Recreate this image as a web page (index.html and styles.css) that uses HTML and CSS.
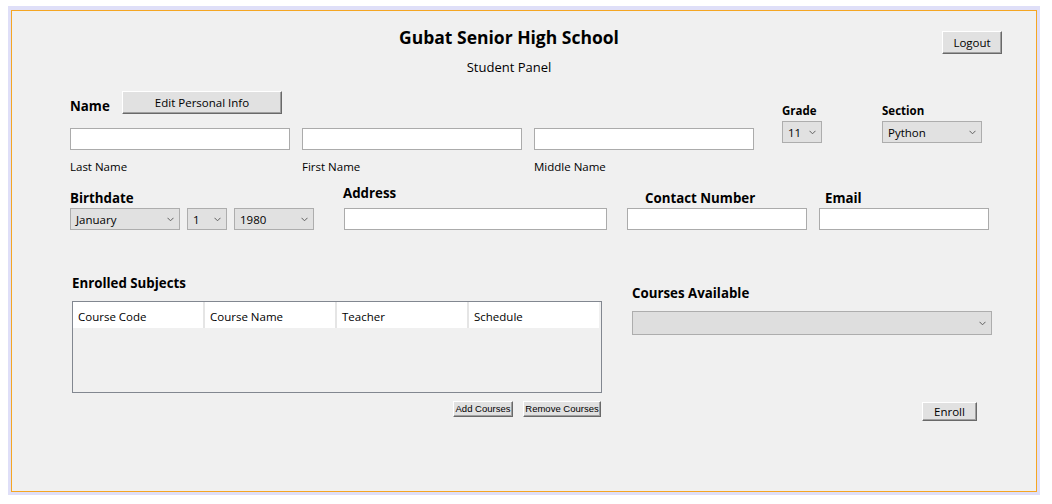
FILE: index.html
```html
<!DOCTYPE html>
<html lang="en">
<head>
<meta charset="utf-8">
<title>Student Panel</title>
<link rel="stylesheet" href="styles.css">
</head>
<body>
<div class="frame">
  <div class="panel">
    <header class="header">
      <div class="titles">
        <h1 class="title">Gubat Senior High School</h1>
        <p class="subtitle">Student Panel</p>
      </div>
      <button class="btn btn-logout" type="button">Logout</button>
    </header>

    <section class="row row-name">
      <div class="name-block">
        <div class="name-head">
          <span class="label label-name">Name</span>
          <button class="btn btn-edit" type="button">Edit Personal Info</button>
        </div>
        <div class="name-fields">
          <div class="field"><input class="entry entry-name" type="text"><span class="sublabel">Last Name</span></div>
          <div class="field"><input class="entry entry-name" type="text"><span class="sublabel">First Name</span></div>
          <div class="field"><input class="entry entry-name" type="text"><span class="sublabel">Middle Name</span></div>
        </div>
      </div>
      <div class="small-group grade-group">
        <span class="label-sm">Grade</span>
        <div class="combo combo-grade"><span>11</span><svg class="chev" width="7" height="5" viewBox="0 0 7 5"><polyline points="0.5,0.8 3.5,3.8 6.5,0.8"/></svg></div>
      </div>
      <div class="small-group section-group">
        <span class="label-sm">Section</span>
        <div class="combo combo-section"><span>Python</span><svg class="chev" width="7" height="5" viewBox="0 0 7 5"><polyline points="0.5,0.8 3.5,3.8 6.5,0.8"/></svg></div>
      </div>
    </section>

    <section class="row row-info">
      <div class="group bd-group">
        <span class="label label-bd">Birthdate</span>
        <div class="combos">
          <div class="combo combo-month"><span>January</span><svg class="chev" width="7" height="5" viewBox="0 0 7 5"><polyline points="0.5,0.8 3.5,3.8 6.5,0.8"/></svg></div>
          <div class="combo combo-day"><span>1</span><svg class="chev" width="7" height="5" viewBox="0 0 7 5"><polyline points="0.5,0.8 3.5,3.8 6.5,0.8"/></svg></div>
          <div class="combo combo-year"><span>1980</span><svg class="chev" width="7" height="5" viewBox="0 0 7 5"><polyline points="0.5,0.8 3.5,3.8 6.5,0.8"/></svg></div>
        </div>
      </div>
      <div class="group addr-group">
        <span class="label label-addr">Address</span>
        <input class="entry entry-addr" type="text">
      </div>
      <div class="group contact-group">
        <span class="label label-contact">Contact Number</span>
        <input class="entry entry-contact" type="text">
      </div>
      <div class="group email-group">
        <span class="label label-email">Email</span>
        <input class="entry entry-email" type="text">
      </div>
    </section>

    <section class="row row-courses">
      <div class="enrolled">
        <span class="label">Enrolled Subjects</span>
        <div class="table">
          <div class="thead">
            <div class="th">Course Code</div>
            <div class="th">Course Name</div>
            <div class="th">Teacher</div>
            <div class="th th-last">Schedule</div>
          </div>
        </div>
        <div class="table-actions">
          <button class="btn btn-small btn-add" type="button">Add Courses</button>
          <button class="btn btn-small btn-remove" type="button">Remove Courses</button>
        </div>
      </div>
      <div class="available">
        <span class="label">Courses Available</span>
        <div class="combo combo-courses"><svg class="chev" width="7" height="5" viewBox="0 0 7 5"><polyline points="0.5,0.8 3.5,3.8 6.5,0.8"/></svg></div>
        <button class="btn btn-enroll" type="button">Enroll</button>
      </div>
    </section>
  </div>
</div>
</body>
</html>
```

FILE: styles.css
```css
* { box-sizing: border-box; }

body {
  margin: 6px 8px;
  background: #ffffff;
  font-family: "Open Sans", "Noto Sans", sans-serif;
  color: #000000;
}

.frame {
  width: 1032px;
  border: 3px solid #dfdff8;
  border-top-width: 4px;
}

.panel {
  height: 482px;
  border: 1px solid #f5a623;
  background: #f0f0f0;
}

/* header */
.header {
  display: grid;
}
.titles,
.btn-logout {
  grid-area: 1 / 1;
}
.titles {
  padding: 14px 30px 0 0;
  text-align: center;
}
.title {
  margin: 0;
  font-size: 17.5px;
  line-height: 24px;
  font-weight: 700;
}
.subtitle {
  margin: 9px 0 0;
  font-size: 13px;
  line-height: 18px;
}
.btn-logout {
  justify-self: end;
  align-self: start;
  margin: 20px 34px 0 0;
  width: 60px;
  height: 23px;
}

/* generic controls */
.btn {
  font-family: inherit;
  font-size: 11.5px;
  color: #000;
  background: #e1e1e1;
  border: 1px solid;
  border-color: #ffffff #696969 #696969 #ffffff;
  box-shadow: inset -1px -1px 0 #a0a0a0;
  padding: 0;
}

.entry {
  display: block;
  height: 22px;
  border: 1px solid #ababab;
  background: #ffffff;
  padding: 0 4px;
  margin: 0;
  font: inherit;
}

.combo {
  display: flex;
  align-items: center;
  justify-content: space-between;
  height: 22px;
  border: 1px solid #adadad;
  background: #e1e1e1;
  padding: 1px 5px 0 5px;
  font-size: 11.5px;
  line-height: 16px;
}
.chev {
  display: block;
  flex: none;
}
.chev polyline {
  fill: none;
  stroke: #5f5f5f;
  stroke-width: 1;
}

.label {
  display: block;
  font-size: 13.3px;
  line-height: 20px;
  font-weight: 700;
}
.label-sm {
  display: block;
  font-size: 11.5px;
  line-height: 16px;
  font-weight: 700;
}

/* name row */
.row-name {
  display: flex;
  align-items: flex-start;
  margin: 15px 0 0 58px;
}
.name-head {
  display: flex;
  align-items: flex-start;
  height: 23px;
}
.label-name {
  width: 52px;
  margin-top: 5px;
}
.btn-edit {
  width: 160px;
  height: 23px;
}
.name-fields {
  display: flex;
  gap: 12px;
  margin-top: 14px;
}
.field {
  display: flex;
  flex-direction: column;
}
.entry-name {
  width: 220px;
}
.sublabel {
  margin-top: 9px;
  font-size: 11.5px;
  line-height: 16px;
}

.small-group {
  display: flex;
  flex-direction: column;
  margin-top: 12px;
}
.small-group .combo {
  margin-top: 2px;
}
.grade-group {
  margin-left: 28px;
}
.combo-grade {
  width: 40px;
}
.section-group {
  margin-left: 60px;
}
.combo-section {
  width: 100px;
}

/* info row */
.row-info {
  display: flex;
  align-items: flex-end;
  margin: 8px 0 0 58px;
}
.group {
  display: flex;
  flex-direction: column;
}
.group .label {
  margin-bottom: 0;
}
.combos {
  display: flex;
  gap: 7px;
}
.combo-month { width: 110px; }
.combo-day { width: 40px; }
.combo-year { width: 80px; }

.addr-group {
  margin-left: 29px;
}
.group .label-addr {
  margin-bottom: 5px;
}
.entry-addr {
  width: 263px;
  margin-left: 1px;
}
.contact-group {
  margin-left: 20px;
}
.label-contact {
  padding-left: 18px;
}
.entry-contact {
  width: 180px;
}
.email-group {
  margin-left: 12px;
}
.label-email {
  padding-left: 6px;
}
.entry-email {
  width: 170px;
}

/* courses row */
.row-courses {
  display: flex;
  align-items: flex-start;
  margin: 43px 0 0 60px;
}
.enrolled {
  width: 530px;
  display: flex;
  flex-direction: column;
}
.table {
  margin-top: 8px;
  height: 92px;
  border: 1px solid #828790;
  background: #f0f0f0;
}
.thead {
  display: flex;
  height: 26px;
}
.th {
  width: 132px;
  background: #ffffff;
  border-right: 2px solid #e5e5e5;
  padding: 3px 0 0 5px;
  font-size: 11.5px;
  line-height: 23px;
}
.th-last {
  width: 130px;
  border-right: 0;
}
.table-actions {
  display: flex;
  justify-content: flex-end;
  gap: 10px;
  margin: 8px 1px 0 0;
}
.btn-small {
  height: 16px;
  font-family: "Liberation Sans", Arial, sans-serif;
  font-size: 9.5px;
  line-height: 14px;
}
.btn-add { width: 60px; }
.btn-remove { width: 78px; }

.available {
  width: 360px;
  margin: 10px 0 0 30px;
  display: flex;
  flex-direction: column;
}
.combo-courses {
  margin-top: 8px;
  height: 24px;
  justify-content: flex-end;
  background: #dedede;
}
.btn-enroll {
  align-self: flex-end;
  margin: 67px 15px 0 0;
  width: 55px;
  height: 19px;
}
```
